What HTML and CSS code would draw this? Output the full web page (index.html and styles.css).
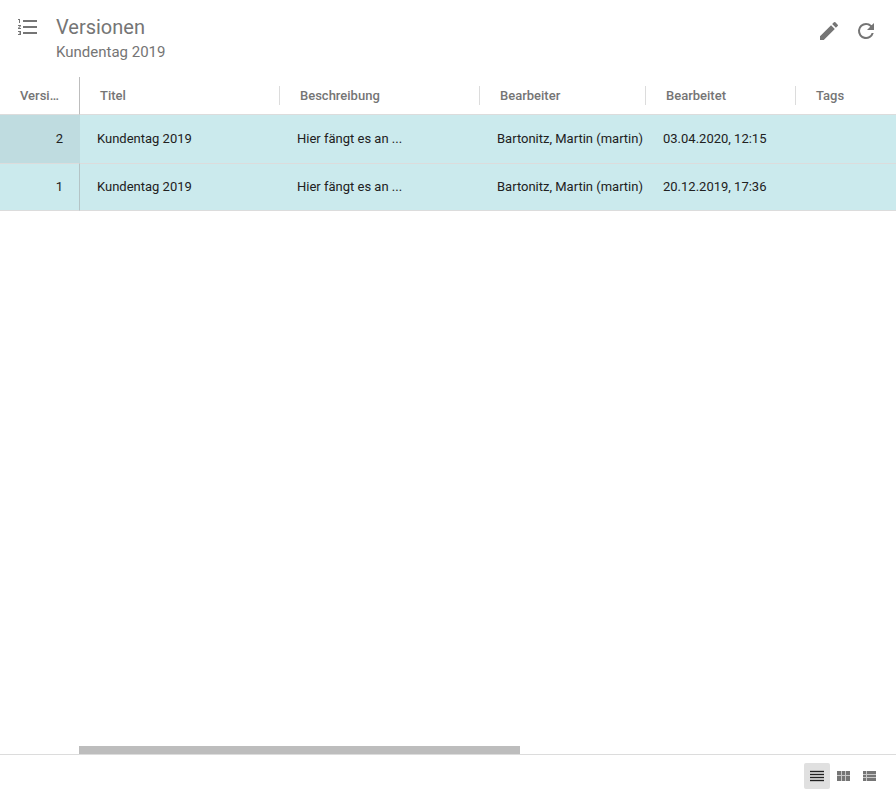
FILE: index.html
```html
<!DOCTYPE html>
<html lang="de">
<head>
<meta charset="utf-8">
<meta name="viewport" content="width=device-width, initial-scale=1">
<title>Versionen</title>
<link rel="stylesheet" href="styles.css">
</head>
<body>
<header class="header">
  <svg class="header-icon" viewBox="0 0 24 24" aria-hidden="true"><path d="M2 17h2v.5H3v1h1v.5H2v1h3v-4H2v1zm1-9h1V4H2v1h1v3zm-1 3h1.8L2 13.1v.9h3v-1H3.2L5 10.900V10H2v1zm5-6v2h14V5H7zm0 14h14v-2H7v2zm0-6h14v-2H7v2z"/></svg>
  <div class="heading">
    <h1 class="title">Versionen</h1>
    <p class="subtitle">Kundentag 2019</p>
  </div>
  <div class="actions">
    <button class="icon-button" type="button" aria-label="Bearbeiten"><svg viewBox="0 0 24 24"><path d="M3 17.250V21h3.750L17.810 9.940l-3.750-3.750L3 17.250zM20.710 7.040a1 1 0 0 0 0-1.410l-2.340-2.340a1 1 0 0 0-1.410 0l-1.830 1.830 3.750 3.750 1.830-1.830z"/></svg></button>
    <button class="icon-button" type="button" aria-label="Aktualisieren"><svg viewBox="0 0 24 24"><path d="M17.650 6.350A7.960 7.960 0 0 0 12 4a8 8 0 1 0 7.730 10h-2.080A6 6 0 1 1 12 6c1.660 0 3.140.690 4.220 1.780L13 11h7V4l-2.350 2.350z"/></svg></button>
  </div>
</header>
<main class="content">
  <table class="versions">
    <colgroup><col class="col-version"><col class="col-text"><col class="col-text"><col class="col-editor"><col class="col-date"><col></colgroup>
    <thead>
      <tr><th class="pinned">Version</th><th>Titel</th><th>Beschreibung</th><th>Bearbeiter</th><th>Bearbeitet</th><th>Tags</th></tr>
    </thead>
    <tbody>
      <tr><td class="pinned current">2</td><td>Kundentag 2019</td><td>Hier fängt es an ...</td><td>Bartonitz, Martin (martin)</td><td>03.04.2020, 12:15</td><td></td></tr>
      <tr><td class="pinned">1</td><td>Kundentag 2019</td><td>Hier fängt es an ...</td><td>Bartonitz, Martin (martin)</td><td>20.12.2019, 17:36</td><td></td></tr>
    </tbody>
  </table>
  <div class="scroll-track"><div class="scroll-thumb"></div></div>
</main>
<footer class="footer">
  <button class="view-button active" type="button" aria-label="Liste" aria-pressed="true"><svg viewBox="0 0 14 12"><path fill="#bdbdbd" d="M0 0h14v12H0z"/><path d="M0 1h14v1H0zM0 4h14v1H0zM0 7h14v1H0zM0 10h14v1H0z"/></svg></button>
  <button class="view-button" type="button" aria-label="Kacheln"><svg viewBox="0 0 14 12"><path fill="#c8c8c8" d="M1 1h13v10H1z"/><path d="M1 1h4v4H1zM6 1h3v4H6zM10 1h4v4h-4zM1 6h4v5H1zM6 6h3v5H6zM10 6h4v5h-4z"/></svg></button>
  <button class="view-button" type="button" aria-label="Details"><svg viewBox="0 0 14 12"><path fill="#c8c8c8" d="M1 1h13v10H1z"/><path d="M1 1h3v3H1zM5 1h9v3H5zM1 5h3v2H1zM5 5h9v2H5zM1 8h3v3H1zM5 8h9v3H5z"/></svg></button>
</footer>
</body>
</html>
```
FILE: styles.css
```css
* { box-sizing: border-box; }

body {
  display: flex;
  flex-direction: column;
  min-height: 100vh;
  margin: 0;
  background: #fff;
  color: #212121;
  font-family: Roboto, "Liberation Sans", sans-serif;
  font-size: 13px;
}

svg { display: block; fill: currentColor; }

button {
  padding: 0;
  border: 0;
  background: none;
  color: inherit;
  cursor: pointer;
}

.header {
  display: flex;
  align-items: flex-start;
  height: 77px;
  padding: 15px 18px 0 16px;
  color: #757575;
}

.header-icon { width: 24px; height: 24px; }

.heading { flex: 1; margin-left: 16px; }

.title {
  margin: 0;
  font-size: 20px;
  font-weight: 400;
  line-height: 24px;
}

.subtitle {
  margin: 0;
  font-size: 15px;
  line-height: 26px;
}

.actions { display: flex; gap: 13px; padding-top: 4px; }

.icon-button, .icon-button svg { width: 24px; height: 24px; }

.content { display: flex; flex: 1; flex-direction: column; }

.versions {
  width: 100%;
  table-layout: fixed;
  border-collapse: separate;
  border-spacing: 0;
}

.col-version { width: 80px; }
.col-text { width: 200px; }
.col-editor { width: 166px; }
.col-date { width: 150px; }

.versions th {
  height: 38px;
  padding: 0 20px;
  border-bottom: 1px solid #dcdcdc;
  background: linear-gradient(#dcdcdc, #dcdcdc) right center / 1px 19px no-repeat;
  color: #757575;
  font-weight: 500;
  text-align: left;
  overflow: hidden;
  text-overflow: ellipsis;
  white-space: nowrap;
}

.versions th:last-child { background: none; }

.versions th.pinned { border-right: 1px solid #bdbdbd; background: none; }

.versions td {
  height: 48px;
  padding: 0 0 2px 17px;
  background: #cbeaed;
  white-space: nowrap;
}

.versions tr:last-child td {
  border-top: 1px solid #dcdcdc;
  border-bottom: 1px solid #dcdcdc;
}

.versions td.pinned {
  padding: 0 16px 2px 0;
  border-right: 1px solid #b4c4c6;
  text-align: right;
}

.versions td.current { border-right-color: #bfdce0; background: #bfdce0; }

.scroll-track { margin: auto 0 0 79px; }
.scroll-thumb { width: 54%; height: 8px; background: #bdbdbd; }

.footer {
  display: flex;
  justify-content: flex-end;
  height: 41px;
  padding: 8px 14px 0;
  border-top: 1px solid #dcdcdc;
}

.view-button {
  display: grid;
  place-items: center;
  width: 26px;
  height: 26px;
  border-radius: 2px;
  color: #757575;
}

.view-button svg { width: 14px; height: 12px; }

.view-button.active { background: #e0e0e0; color: #212121; }
```
